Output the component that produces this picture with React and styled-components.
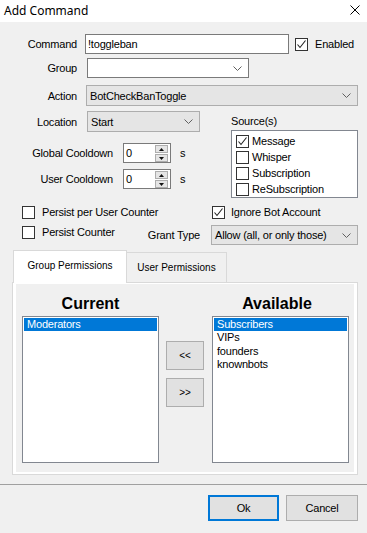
import React from "react";
import styled, { createGlobalStyle } from "styled-components";

const GlobalStyle = createGlobalStyle`
  html, body {
    margin: 0;
    padding: 0;
    background: #f0f0f0;
  }
  body {
    font-family: "Liberation Sans", Arial, sans-serif;
    font-size: 11px;
    letter-spacing: -0.2px;
    color: #000;
  }
  * {
    box-sizing: border-box;
  }
`;

const Window = styled.div`
  width: 367px;
  height: 533px;
  display: flex;
  flex-direction: column;
  background: #f0f0f0;
  overflow: hidden;
`;

const TitleBar = styled.div`
  height: 22px;
  flex-shrink: 0;
  background: #fff;
  display: flex;
  align-items: center;
  justify-content: space-between;
  padding: 0 7px 2px 4px;
`;

const Title = styled.span`
  font-family: "Noto Sans", "Open Sans", sans-serif;
  font-size: 12px;
  letter-spacing: 0;
`;

const Body = styled.div`
  padding: 12px 9px 0 0;
  display: flex;
  flex-direction: column;
`;

const Row = styled.div`
  display: flex;
  align-items: center;
  height: ${(p) => p.$h || 20}px;
  margin-top: ${(p) => p.$mt || 0}px;
`;

const Label = styled.span`
  width: ${(p) => p.$w}px;
  flex-shrink: 0;
  text-align: right;
  white-space: nowrap;
`;

const TextBox = styled.div`
  width: ${(p) => p.$w}px;
  height: 100%;
  margin-left: ${(p) => p.$ml || 0}px;
  border: 1px solid #7a7a7a;
  background: #fff;
  display: flex;
  align-items: center;
  padding: 0 2px;
  position: relative;
`;

const Combo = styled.div`
  ${(p) => (p.$w ? `width: ${p.$w}px;` : "flex: 1;")}
  height: 100%;
  margin-left: ${(p) => p.$ml || 0}px;
  border: 1px solid ${(p) => (p.$gray ? "#adadad" : "#7a7a7a")};
  background: ${(p) => (p.$gray ? "#e5e5e5" : "#fff")};
  display: flex;
  align-items: center;
  justify-content: space-between;
  padding: 0 6px 0 3px;
`;

const Box = styled.span`
  width: 13px;
  height: 13px;
  flex-shrink: 0;
  border: 1px solid #333;
  background: #fff;
  display: flex;
  align-items: center;
  justify-content: center;
`;

const Option = styled.div`
  display: flex;
  align-items: center;
  gap: ${(p) => p.$gap || 7}px;
  ${(p) => (p.$w ? `width: ${p.$w}px;` : "")}
  ${(p) => (p.$flex ? "flex: 1;" : "")}
  margin-left: ${(p) => p.$ml || 0}px;
  margin-bottom: ${(p) => p.$mb || 0}px;
  white-space: nowrap;
`;

const Section = styled.div`
  display: flex;
  margin-top: 5px;
`;

const LeftCol = styled.div`
  width: 231px;
  display: flex;
  flex-direction: column;
`;

const RightCol = styled.div`
  flex: 1;
  display: flex;
  flex-direction: column;
`;

const SourceTitle = styled.div`
  margin-top: 4px;
  height: 15px;
`;

const SourceList = styled.div`
  border: 1px solid #828790;
  background: #fff;
  padding: 2px 4px 0;
  height: 68px;
`;

const SourceItem = styled.div`
  height: 16px;
  display: flex;
  align-items: center;
  gap: 3px;
`;

const Spin = styled.div`
  position: absolute;
  right: 2px;
  top: 1px;
  width: 13px;
  display: flex;
  flex-direction: column;
  gap: 1px;
`;

const SpinButton = styled.div`
  height: 8px;
  background: #e5e5e5;
  border: 1px solid #adadad;
  display: flex;
  align-items: center;
  justify-content: center;
`;

const Unit = styled.span`
  margin-left: 9px;
`;

const TabStrip = styled.div`
  display: flex;
  align-items: flex-start;
  margin-top: 5px;
  padding-left: 13px;
`;

const Tab = styled.div`
  width: ${(p) => p.$w}px;
  height: ${(p) => (p.$active ? 33 : 30)}px;
  margin-top: ${(p) => (p.$active ? 0 : 2)}px;
  margin-bottom: ${(p) => (p.$active ? -1 : 0)}px;
  background: ${(p) => (p.$active ? "#fff" : "#f0f0f0")};
  border: 1px solid #d9d9d9;
  border-bottom: none;
  ${(p) => (p.$active ? "" : "border-left: none;")}
  position: relative;
  z-index: ${(p) => (p.$active ? 1 : 0)};
  display: flex;
  justify-content: center;
  padding-top: 9px;
  font-size: 10px;
  letter-spacing: 0;
  white-space: nowrap;
`;

const Panel = styled.div`
  margin-left: 12px;
  border: 1px solid #d9d9d9;
  background: #fff;
  padding: 1px 3px 2px;
`;

const Page = styled.div`
  background: #f0f0f0;
  height: 188px;
  padding: 10px 0 0 6px;
  display: flex;
`;

const ListColumn = styled.div`
  width: 137px;
  display: flex;
  flex-direction: column;
  margin-left: ${(p) => p.$ml || 0}px;
`;

const Heading = styled.div`
  font-weight: bold;
  font-size: 16px;
  letter-spacing: 0;
  line-height: 19px;
  height: 19px;
  margin-bottom: 3px;
  text-align: center;
  padding-right: ${(p) => p.$pr || 0}px;
`;

const ListBox = styled.div`
  height: 147px;
  border: 1px solid #828790;
  background: #fff;
  padding: 1px;
`;

const ListItem = styled.div`
  height: 13.4px;
  line-height: 13px;
  padding-left: 3px;
  background: ${(p) => (p.$selected ? "#0078d7" : "transparent")};
  color: ${(p) => (p.$selected ? "#fff" : "#000")};
`;

const MoveColumn = styled.div`
  width: 38px;
  margin-left: 7px;
  padding-top: 47px;
  display: flex;
  flex-direction: column;
  gap: 8px;
`;

const Button = styled.div`
  width: ${(p) => p.$w}px;
  height: ${(p) => p.$h}px;
  background: #e1e1e1;
  border: ${(p) => (p.$default ? "2px solid #0078d7" : "1px solid #adadad")};
  display: flex;
  align-items: center;
  justify-content: center;
  font-size: ${(p) => p.$fs || 11}px;
`;

const Footer = styled.div`
  margin-top: 9px;
  border-top: 1px solid #a0a0a0;
  padding: 10px 9px 0 0;
  display: flex;
  justify-content: flex-end;
  gap: 7px;
`;

const Chevron = () => (
  <svg width="9" height="5" viewBox="0 0 9 5">
    <polyline points="0.5,0.5 4.5,4.5 8.5,0.5" fill="none" stroke="#606060" strokeWidth="1" />
  </svg>
);

const Check = () => (
  <svg width="11" height="11" viewBox="0 0 11 11">
    <polyline points="1.5,5.5 4,8.5 9.5,1.5" fill="none" stroke="#222" strokeWidth="1.1" />
  </svg>
);

const Arrow = ({ down }) => (
  <svg width="5" height="3" viewBox="0 0 5 3">
    <polygon points={down ? "0,0 5,0 2.5,3" : "0,3 5,3 2.5,0"} fill="#111" />
  </svg>
);

const CheckOption = ({ checked, children, ...rest }) => (
  <Option {...rest}>
    <Box>{checked && <Check />}</Box>
    <span>{children}</span>
  </Option>
);

const NumBox = ({ value }) => (
  <TextBox $w={48} $ml={10}>
    {value}
    <Spin>
      <SpinButton>
        <Arrow />
      </SpinButton>
      <SpinButton>
        <Arrow down />
      </SpinButton>
    </Spin>
  </TextBox>
);

const sources = [
  { name: "Message", checked: true },
  { name: "Whisper", checked: false },
  { name: "Subscription", checked: false },
  { name: "ReSubscription", checked: false },
];

const available = ["Subscribers", "VIPs", "founders", "knownbots"];

export default function App() {
  return (
    <Window>
      <GlobalStyle />
      <TitleBar>
        <Title>Add Command</Title>
        <svg width="10" height="10" viewBox="0 0 10 10">
          <path d="M0.5,0.5 L9.5,9.5 M9.5,0.5 L0.5,9.5" stroke="#000" strokeWidth="1" />
        </svg>
      </TitleBar>

      <Body>
        <Row>
          <Label $w={77}>Command</Label>
          <TextBox $w={204} $ml={8}>!toggleban</TextBox>
          <CheckOption checked $ml={6} $gap={7}>
            Enabled
          </CheckOption>
        </Row>

        <Row $mt={4}>
          <Label $w={77}>Group</Label>
          <Combo $w={162} $ml={10}>
            <span />
            <Chevron />
          </Combo>
        </Row>

        <Row $mt={7} $h={21}>
          <Label $w={77}>Action</Label>
          <Combo $gray $ml={9}>
            <span>BotCheckBanToggle</span>
            <Chevron />
          </Combo>
        </Row>

        <Section>
          <LeftCol>
            <Row $h={21}>
              <Label $w={77}>Location</Label>
              <Combo $gray $w={113} $ml={10}>
                <span>Start</span>
                <Chevron />
              </Combo>
            </Row>
            <Row $mt={11}>
              <Label $w={113}>Global Cooldown</Label>
              <NumBox value="0" />
              <Unit>s</Unit>
            </Row>
            <Row $mt={6}>
              <Label $w={113}>User Cooldown</Label>
              <NumBox value="0" />
              <Unit>s</Unit>
            </Row>
          </LeftCol>
          <RightCol>
            <SourceTitle>Source(s)</SourceTitle>
            <SourceList>
              {sources.map((s) => (
                <SourceItem key={s.name}>
                  <Box>{s.checked && <Check />}</Box>
                  <span>{s.name}</span>
                </SourceItem>
              ))}
            </SourceList>
          </RightCol>
        </Section>

        <Row $mt={6} $h={16}>
          <CheckOption $ml={22} $w={190}>
            Persist per User Counter
          </CheckOption>
          <CheckOption checked $gap={6}>
            Ignore Bot Account
          </CheckOption>
        </Row>

        <Row $mt={5}>
          <CheckOption $ml={22} $flex $mb={6}>
            Persist Counter
          </CheckOption>
          <Label $w={60}>Grant Type</Label>
          <Combo $gray $w={147} $ml={11}>
            <span>Allow (all, or only those)</span>
            <Chevron />
          </Combo>
        </Row>

        <TabStrip>
          <Tab $active $w={114}>
            Group Permissions
          </Tab>
          <Tab $w={100}>User Permissions</Tab>
        </TabStrip>
        <Panel>
          <Page>
            <ListColumn>
              <Heading>Current</Heading>
              <ListBox>
                <ListItem $selected>Moderators</ListItem>
              </ListBox>
            </ListColumn>
            <MoveColumn>
              <Button $w={38} $h={29} $fs={10}>
                &lt;&lt;
              </Button>
              <Button $w={38} $h={29} $fs={10}>
                &gt;&gt;
              </Button>
            </MoveColumn>
            <ListColumn $ml={8}>
              <Heading $pr={7}>Available</Heading>
              <ListBox>
                {available.map((name, i) => (
                  <ListItem key={name} $selected={i === 0}>
                    {name}
                  </ListItem>
                ))}
              </ListBox>
            </ListColumn>
          </Page>
        </Panel>
      </Body>

      <Footer>
        <Button $default $w={71} $h={26}>
          Ok
        </Button>
        <Button $w={72} $h={26}>
          Cancel
        </Button>
      </Footer>
    </Window>
  );
}
